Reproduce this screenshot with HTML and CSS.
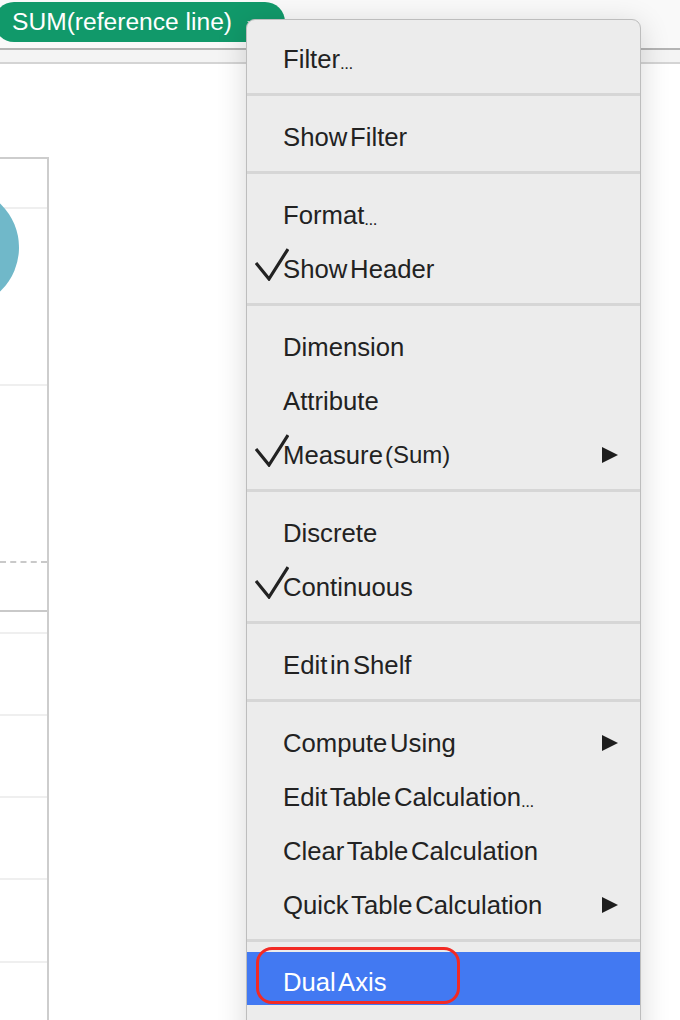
FILE: index.html
```html
<!DOCTYPE html>
<html>
<head>
<meta charset="utf-8">
<link rel="stylesheet" href="styles.css">
</head>
<body>
<div class="page">
  <header class="shelf">
    <div class="pill">SUM(reference line)<span class="caret"></span></div>
  </header>
  <div class="band"></div>
  <section class="canvas">
    <div class="panel">
      <div class="circle"></div>
      <div class="row r1"></div>
      <div class="row r2"></div>
      <div class="row r3 dashed"></div>
      <div class="row r4 dark"></div>
      <div class="row r5"></div>
      <div class="row r6"></div>
      <div class="row r6"></div>
      <div class="row r6"></div>
      <div class="row r9"></div>
      <div class="row last"></div>
    </div>
  </section>

  <nav class="menu">
    <div class="group first">
      <div class="item">Filter<span class="dots">...</span></div>
    </div>
    <div class="group">
      <div class="item">Show Filter</div>
    </div>
    <div class="group">
      <div class="item">Format<span class="dots">...</span></div>
      <div class="item"><svg class="check" viewBox="0 0 34 33" width="34" height="33"><path d="M1 15 L14 31 L33 1"/></svg>Show Header</div>
    </div>
    <div class="group">
      <div class="item">Dimension</div>
      <div class="item">Attribute</div>
      <div class="item"><svg class="check" viewBox="0 0 34 33" width="34" height="33"><path d="M1 15 L14 31 L33 1"/></svg>Measure <span class="paren">(Sum)</span><span class="arrow"></span></div>
    </div>
    <div class="group">
      <div class="item">Discrete</div>
      <div class="item"><svg class="check" viewBox="0 0 34 33" width="34" height="33"><path d="M1 15 L14 31 L33 1"/></svg>Continuous</div>
    </div>
    <div class="group">
      <div class="item">Edit in Shelf</div>
    </div>
    <div class="group">
      <div class="item">Compute Using<span class="arrow"></span></div>
      <div class="item">Edit Table Calculation<span class="dots">...</span></div>
      <div class="item">Clear Table Calculation</div>
      <div class="item">Quick Table Calculation<span class="arrow"></span></div>
    </div>
    <div class="group lastgroup">
      <div class="item active">Dual Axis<span class="annot"></span></div>
      <div class="item">&nbsp;</div>
    </div>
  </nav>
</div>
</body>
</html>
```

FILE: styles.css
```css
html, body {
  margin: 0;
  padding: 0;
  background: #ffffff;
}
body {
  width: 680px;
  height: 1020px;
  overflow: hidden;
  font-family: "Liberation Sans", Arial, Helvetica, sans-serif;
}
.page {
  position: relative;
  width: 680px;
  height: 1020px;
  overflow: hidden;
}
.shelf {
  background: #f9f9f9;
  border-bottom: 2px solid #b4b4b4;
  box-sizing: border-box;
  height: 50px;
  padding-top: 2px;
}
.pill {
  display: inline-flex;
  align-items: center;
  height: 40px;
  margin-left: -6px;
  padding: 0 30px 0 18px;
  border-radius: 20px;
  background: #11996a;
  color: #ffffff;
  font-size: 24.6px;
  white-space: nowrap;
  box-sizing: border-box;
  width: 291px;
}
.caret {
  display: inline-block;
  width: 0;
  height: 0;
  margin-left: 15px;
  margin-top: 4px;
  border-left: 6px solid transparent;
  border-right: 6px solid transparent;
  border-top: 6px solid #b7d9c9;
}
.band {
  height: 12px;
  background: #f4f4f4;
  border-bottom: 2px solid #d4d4d4;
}
.canvas {
  padding-top: 93px;
}
.panel {
  position: relative;
  width: 47px;
  border-top: 2px solid #cdcdcd;
  border-right: 2px solid #cdcdcd;
  overflow: hidden;
  height: 900px;
  display: flex;
  flex-direction: column;
}
.circle {
  position: absolute;
  left: -102px;
  top: 28px;
  width: 121px;
  height: 121px;
  border-radius: 50%;
  background: #70b8c9;
}
.row {
  flex: none;
  border-bottom: 2px solid #efefef;
}
.r1 { height: 48px; }
.r2 { height: 175px; }
.r3 { height: 175px; }
.dashed { border-bottom: 2px dashed #c9c9c9; }
.r4 { height: 47px; }
.dark { border-bottom: 2px solid #c9c9c9; }
.r5 { height: 20px; }
.r6 { height: 80px; }
.r9 { height: 81px; }
.last { border-bottom: none; height: 100px; }

.menu {
  position: absolute;
  left: 246px;
  top: 19px;
  width: 395px;
  box-sizing: border-box;
  background: #ececec;
  border: 1px solid #bdbdbd;
  border-radius: 9px;
  box-shadow: 0 6px 30px rgba(0, 0, 0, 0.16);
  color: #222222;
  font-size: 25.7px;
  word-spacing: -4.3px;
}
.group {
  padding: 14px 0 7px;
  border-top: 3px solid #d6d6d6;
}
.group.first {
  padding-top: 12px;
  border-top: none;
}
.group.lastgroup {
  padding-top: 10px;
}
.item {
  position: relative;
  display: flex;
  align-items: center;
  height: 54px;
  padding: 0 22px 0 36px;
  white-space: nowrap;
}
.dots {
  font-size: 17px;
  letter-spacing: -0.5px;
  align-self: center;
  margin-top: 9px;
}
.paren {
  margin-left: 2px;
  font-size: 24px;
}
.check {
  flex: none;
  margin: -10px -6px 0 -28px;
  fill: none;
  stroke: #222222;
  stroke-width: 3.2;
  stroke-linejoin: miter;
}
.arrow {
  margin-left: auto;
  width: 0;
  height: 0;
  border-left: 16px solid #1e1e1e;
  border-top: 8.5px solid transparent;
  border-bottom: 8.5px solid transparent;
}
.item.active {
  height: 53px;
  box-sizing: border-box;
  padding-top: 8px;
  background: #4279f2;
  color: #ffffff;
  word-spacing: -3.5px;
}
.annot {
  position: absolute;
  left: 9px;
  top: -5px;
  width: 204px;
  height: 57px;
  box-sizing: border-box;
  border: 3.5px solid #f22a24;
  border-radius: 16px;
}
```
